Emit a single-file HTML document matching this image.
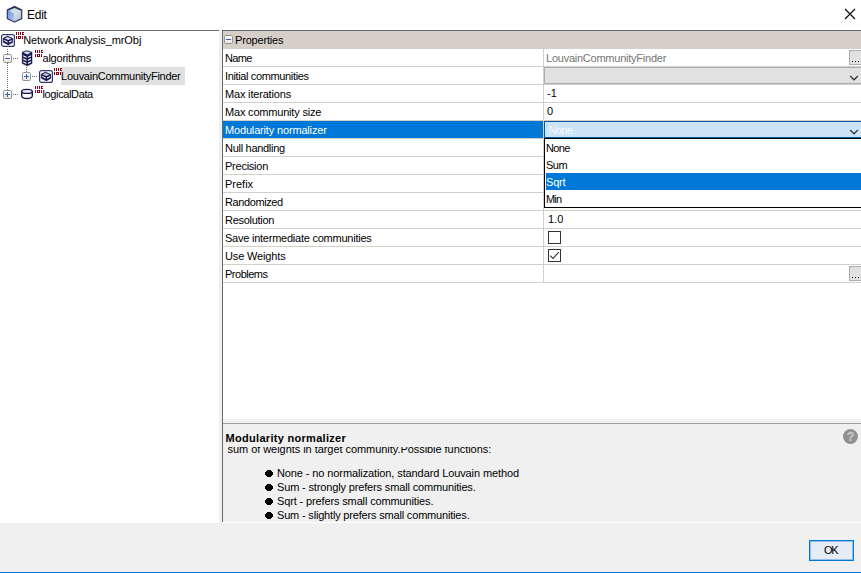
<!DOCTYPE html>
<html><head><meta charset="utf-8"><title>Edit</title>
<style>
html,body{margin:0;padding:0;}
body{width:861px;height:573px;overflow:hidden;background:#fff;position:relative;font-family:"Liberation Sans",sans-serif;font-size:11px;color:#000;}
.abs{position:absolute;}
svg{position:absolute;overflow:visible;}
#title{left:27px;top:8px;font-size:12px;line-height:15px;letter-spacing:-0.25px;}
#footer{left:0;top:523px;width:861px;height:49px;background:#f0f0f0;}
#blue{left:0;top:572px;width:861px;height:1px;background:#0078d7;}
#treetop{left:0;top:30px;width:219px;height:1px;background:#696969;}
#gap{left:219px;top:30px;width:3px;height:493px;background:#f0f0f0;}
#pleft{left:222px;top:30px;width:1px;height:492px;background:#696969;}
#ptop{left:222px;top:30px;width:639px;height:1px;background:#696969;}
#phead{left:223px;top:31px;width:638px;height:18px;background:#d4d0c8;}
#hgap{left:223px;top:419px;width:638px;height:4px;background:#f0f0f0;}
#dtop{left:223px;top:423px;width:638px;height:1px;background:#a0a0a0;}
#desc{left:223px;top:424px;width:638px;height:98px;background:#f0f0f0;overflow:hidden;}
#dbot{left:222px;top:522px;width:639px;height:1px;background:#fff;}
.row{left:223px;width:638px;height:17px;border-bottom:1px solid #d4d0c8;}
.lab{position:absolute;left:2px;top:0;line-height:18px;white-space:nowrap;}
.val{position:absolute;left:325px;top:0;line-height:17px;white-space:nowrap;}
.vdiv{left:543px;top:49px;width:1px;height:234px;background:#d4d0c8;}
.tl{position:absolute;white-space:nowrap;line-height:18px;font-size:11px;}
.dots{left:849px;width:12px;height:13px;border:1px solid #adadad;border-right:0;background:#e1e1e1;}
.dots i{position:absolute;top:10px;width:1px;height:1px;background:#000;}
.cb{left:548px;width:11px;height:11px;border:1px solid #333;background:#fff;}
#ok{left:809px;top:540px;width:43px;height:19px;border:1px solid #0078d7;box-shadow:inset 0 0 0 1px #8fc1ec;background:#e5ecf5;text-align:center;line-height:19px;font-size:11px;letter-spacing:-1.1px;text-indent:-1.5px;}
.li{position:absolute;left:1px;width:320px;height:17px;line-height:17px;white-space:nowrap;}
.li span{position:absolute;left:0px;top:1px;}
.bl{position:absolute;left:54px;white-space:nowrap;line-height:14px;}
.bu{position:absolute;left:42px;width:8px;height:7px;border-radius:4px/3.5px;background:#000;}
</style></head><body>
<!-- title bar -->
<svg style="left:0;top:0" width="30" height="30" viewBox="0 0 30 30">
 <defs>
  <linearGradient id="cl" x1="0" y1="0" x2="1" y2="1"><stop offset="0" stop-color="#6c92e2"/><stop offset="1" stop-color="#b9cbf0"/></linearGradient>
  <linearGradient id="cr" x1="0" y1="0" x2="1" y2="1"><stop offset="0" stop-color="#e6edef"/><stop offset="1" stop-color="#a9b7c9"/></linearGradient>
 </defs>
 <path d="M14.5 6.8 L21.4 10 L21.4 18.4 L14.5 21.6 L7.7 18.4 L7.7 10 Z" fill="#c9dfe0" stroke="#2a2f5e" stroke-width="1.9" stroke-linejoin="round"/>
 <path d="M7.9 10.2 L14.3 13.4 L14.3 21.4 L7.9 18.3 Z" fill="url(#cl)"/>
 <path d="M14.5 13.4 L21.2 10.2 L21.2 18.3 L14.5 21.4 Z" fill="url(#cr)"/>
</svg>
<div class="abs" id="title">Edit</div>
<svg style="left:844px;top:8px" width="12" height="12" viewBox="0 0 12 12"><path d="M1 1 L11 11 M11 1 L1 11" stroke="#000" stroke-width="1.1" fill="none"/></svg>

<!-- tree -->
<div class="abs" id="treetop"></div>
<div class="abs" style="left:61px;top:67px;width:124px;height:18px;background:#e0e0e0"></div>
<svg id="treesvg" style="left:0;top:0" width="219" height="120" viewBox="0 0 219 120">
 <defs>
  <g id="mark" fill="#8b0016" shape-rendering="crispEdges">
   <rect x="0" y="0" width="1" height="3"/><rect x="2" y="0" width="1" height="3"/><rect x="4" y="0" width="1" height="3"/>
   <rect x="6" y="0" width="1" height="3"/><rect x="7" y="0" width="1" height="1"/><rect x="7" y="2" width="1" height="1"/>
   <rect x="0" y="4" width="1" height="3"/><rect x="6" y="4" width="1" height="3"/>
   <rect x="2" y="4" width="3" height="1"/><rect x="2" y="6" width="3" height="1"/><rect x="2" y="5" width="1" height="1"/><rect x="4" y="5" width="1" height="1"/>
  </g>
  <linearGradient id="bx" x1="0" y1="0" x2="0" y2="1"><stop offset="0" stop-color="#fff"/><stop offset="1" stop-color="#e6e6e6"/></linearGradient>
  <g id="box">
   <rect x="0.5" y="0.5" width="8" height="8" rx="1.2" fill="url(#bx)" stroke="#919191"/>
   <rect x="2" y="4" width="5" height="1" fill="#3d5cae" shape-rendering="crispEdges"/>
  </g>
  <g id="plus"><use href="#box"/><rect x="4" y="2" width="1" height="5" fill="#3d5cae" shape-rendering="crispEdges"/></g>
  <g id="obj">
   <rect x="0.6" y="0.6" width="12.8" height="11.8" rx="2" fill="#fff" stroke="#34366f" stroke-width="1.2"/>
   <path d="M2.2 4.1 L6.5 2 L11.8 4.3 L11.8 8.5 L7.3 10.9 L2.2 8.3 Z" fill="#17174f" stroke="#17174f" stroke-width="0.4" stroke-linejoin="round"/>
   <path d="M3.5 4.4 L6.5 3 L10.5 4.6 L7.3 6.1 Z" fill="#d4d4e6"/>
   <path d="M3.3 5.7 L6.6 7.4 L6.6 8.7 L3.3 7 Z" fill="#f6f6fb"/>
   <path d="M8 7.4 L10.8 5.9 L10.8 7.2 L8 8.7 Z" fill="#f6f6fb"/>
  </g>
 </defs>
 <g fill="#6e6e6e" shape-rendering="crispEdges"><rect x="7" y="49" width="1" height="1"/><rect x="7" y="51" width="1" height="1"/><rect x="7" y="53" width="1" height="1"/><rect x="7" y="63" width="1" height="1"/><rect x="7" y="65" width="1" height="1"/><rect x="7" y="67" width="1" height="1"/><rect x="7" y="69" width="1" height="1"/><rect x="7" y="71" width="1" height="1"/><rect x="7" y="73" width="1" height="1"/><rect x="7" y="75" width="1" height="1"/><rect x="7" y="77" width="1" height="1"/><rect x="7" y="79" width="1" height="1"/><rect x="7" y="81" width="1" height="1"/><rect x="7" y="83" width="1" height="1"/><rect x="7" y="85" width="1" height="1"/><rect x="7" y="87" width="1" height="1"/><rect x="7" y="89" width="1" height="1"/><rect x="26" y="67" width="1" height="1"/><rect x="26" y="69" width="1" height="1"/><rect x="26" y="71" width="1" height="1"/><rect x="13" y="58" width="1" height="1"/><rect x="15" y="58" width="1" height="1"/><rect x="17" y="58" width="1" height="1"/><rect x="13" y="94" width="1" height="1"/><rect x="15" y="94" width="1" height="1"/><rect x="17" y="94" width="1" height="1"/><rect x="32" y="76" width="1" height="1"/><rect x="34" y="76" width="1" height="1"/><rect x="36" y="76" width="1" height="1"/></g>
 <use href="#obj" x="1" y="34"/>
 <use href="#mark" x="16" y="32"/>
 <use href="#box" x="3" y="54"/>
 <use href="#mark" x="35" y="50"/>
 <use href="#plus" x="22" y="72"/>
 <use href="#obj" x="39" y="70"/>
 <use href="#mark" x="54" y="68"/>
 <use href="#plus" x="3" y="90"/>
 <use href="#mark" x="35" y="86"/>
 <!-- stack icon -->
 <path d="M22.1 52.1 L26.7 50.4 L32.1 52.1 L32.1 63.6 L27.3 66.1 L22.1 63.6 Z" fill="#17174f" stroke="#17174f" stroke-width="0.3" stroke-linejoin="round"/>
 <path d="M23.2 52.6 L26.7 51.3 L31 52.6 L27.3 54.6 Z" fill="#d6d6e6"/>
 <g fill="#f4f4fa"><path d="M23.2 55.13 L26.6 56.66 L26.6 57.96 L23.2 56.43 Z"/><path d="M28.1 56.52 L31 55.22 L31 56.52 L28.1 57.82 Z"/><path d="M23.2 58.23 L26.6 59.76 L26.6 61.06 L23.2 59.53 Z"/><path d="M28.1 59.62 L31 58.32 L31 59.62 L28.1 60.92 Z"/><path d="M23.2 61.23 L26.6 62.76 L26.6 64.06 L23.2 62.53 Z"/><path d="M28.1 62.62 L31 61.32 L31 62.62 L28.1 63.92 Z"/></g>
 <!-- cylinder -->
 <g stroke="#17174f" stroke-width="1.4" fill="#fff">
  <path d="M21.7 91.4 L21.7 95.8 A5.3 2.7 0 0 0 32.3 95.8 L32.3 91.4"/>
  <ellipse cx="27" cy="91.4" rx="5.3" ry="2" fill="#e9e9f3"/>
 </g>
</svg>
<div class="tl" style="left:23.2px;top:31px;letter-spacing:-0.08px" id="t1">Network Analysis_mrObj</div>
<div class="tl" style="left:42.5px;top:49px;letter-spacing:-0.22px" id="t2">algorithms</div>
<div class="tl" style="left:61.1px;top:67px;letter-spacing:-0.27px" id="t3">LouvainCommunityFinder</div>
<div class="tl" style="left:42.5px;top:85px;letter-spacing:-0.37px" id="t4">logicalData</div>

<div class="abs" id="gap"></div>
<div class="abs" id="ptop"></div>
<div class="abs" id="pleft"></div>
<div class="abs" id="phead"><span class="lab" style="left:12px;letter-spacing:-0.180px">Properties</span></div>
<svg style="left:224px;top:35px" width="9" height="9" viewBox="0 0 9 9"><rect x="0.5" y="0.5" width="8" height="8" rx="1.2" fill="url(#bx)" stroke="#919191"/><rect x="2" y="4" width="5" height="1" fill="#3d5cae" shape-rendering="crispEdges"/></svg>

<div class="abs row" style="top:49px"><span class="lab" style="letter-spacing:-0.670px">Name</span><span class="val" style="left:323px;top:1px;color:#757575;letter-spacing:-0.24px">LouvainCommunityFinder</span></div>
<div class="abs row" style="top:67px"><span class="lab" style="letter-spacing:-0.360px">Initial communities</span></div>
<div class="abs row" style="top:85px"><span class="lab" style="letter-spacing:-0.180px">Max iterations</span><span class="val" style="left:324px">-1</span></div>
<div class="abs row" style="top:103px"><span class="lab" style="letter-spacing:-0.190px">Max community size</span><span class="val" style="left:324px;letter-spacing:-0.3px">0</span></div>
<div class="abs row" style="top:121px;background:#0078d7;color:#fff"><span class="lab" style="letter-spacing:-0.165px">Modularity normalizer</span></div>
<div class="abs row" style="top:139px"><span class="lab" style="letter-spacing:-0.290px">Null handling</span></div>
<div class="abs row" style="top:157px"><span class="lab" style="letter-spacing:-0.240px">Precision</span></div>
<div class="abs row" style="top:175px"><span class="lab" style="letter-spacing:0.000px">Prefix</span></div>
<div class="abs row" style="top:193px"><span class="lab" style="letter-spacing:-0.400px">Randomized</span></div>
<div class="abs row" style="top:211px"><span class="lab" style="letter-spacing:-0.290px">Resolution</span><span class="val">1.0</span></div>
<div class="abs row" style="top:229px"><span class="lab" style="letter-spacing:-0.236px">Save intermediate communities</span></div>
<div class="abs row" style="top:247px"><span class="lab" style="letter-spacing:-0.150px">Use Weights</span></div>
<div class="abs row" style="top:265px"><span class="lab" style="letter-spacing:-0.490px">Problems</span></div>
<div class="abs vdiv"></div>

<!-- value-side widgets -->
<div class="abs dots" style="top:50px"><i style="left:2px"></i><i style="left:5px"></i><i style="left:8px"></i></div>
<div class="abs dots" style="top:266px"><i style="left:2px"></i><i style="left:5px"></i><i style="left:8px"></i></div>
<div class="abs" style="left:544px;top:67px;width:317px;height:15px;border:1px solid #adadad;border-right:0;background:#e1e1e1"></div>
<svg style="left:849px;top:75px" width="10" height="6" viewBox="0 0 10 6"><path d="M1.1 1 L5 4.8 L8.9 1" fill="none" stroke="#383838" stroke-width="1.25"/></svg>
<div class="abs" style="left:544px;top:121px;width:317px;height:15px;border:1px solid #00579f;border-right:0;background:#cce4f7;color:#f4f9fd;line-height:15px"><span style="position:absolute;left:3.5px;top:1px;letter-spacing:-0.67px">None</span></div>
<svg style="left:849px;top:129px" width="10" height="6" viewBox="0 0 10 6"><path d="M1.1 1 L5 4.8 L8.9 1" fill="none" stroke="#383838" stroke-width="1.25"/></svg>
<div class="abs" style="left:544px;top:138px;width:317px;height:68px;border:1px solid #000;border-right:0;background:#fff">
 <div class="li" style="top:0"><span style="letter-spacing:-0.67px">None</span></div>
 <div class="li" style="top:17px"><span style="letter-spacing:-0.5px">Sum</span></div>
 <div class="li" style="top:34px;background:#0078d7;color:#fff"><span style="letter-spacing:-0.2px">Sqrt</span></div>
 <div class="li" style="top:51px"><span style="letter-spacing:-0.8px">Min</span></div>
</div>
<div class="abs cb" style="top:231px"></div>
<div class="abs cb" style="top:249px"></div>
<svg style="left:548px;top:249px" width="13" height="13" viewBox="0 0 13 13"><path d="M2.3 6.6 L5 9.4 L10.8 3.2" fill="none" stroke="#333" stroke-width="1.1"/></svg>

<div class="abs" id="hgap"></div>
<div class="abs" id="dtop"></div>
<div class="abs" id="desc">
 <div style="position:absolute;left:2.5px;top:7px;font-weight:bold;font-size:11px;line-height:14px;white-space:nowrap;letter-spacing:0.3px" id="dtitle">Modularity normalizer</div>
 <div style="position:absolute;left:0;top:23px;width:610px;height:75px;overflow:hidden">
  <div style="position:absolute;left:4.5px;top:-5px;line-height:14px;white-space:nowrap;letter-spacing:-0.05px" id="d0">sum of weights in target community.Possible functions:</div>
  <svg class="bsv" style="left:42px;top:23px" width="8" height="7" viewBox="0 0 8 7" shape-rendering="crispEdges"><rect x="2" y="0" width="4" height="7"/><rect x="1" y="1" width="6" height="5"/><rect x="0" y="2" width="8" height="3"/></svg><div class="bl" style="top:19px;letter-spacing:-0.106px" id="d1">None - no normalization, standard Louvain method</div>
  <svg class="bsv" style="left:42px;top:37px" width="8" height="7" viewBox="0 0 8 7" shape-rendering="crispEdges"><rect x="2" y="0" width="4" height="7"/><rect x="1" y="1" width="6" height="5"/><rect x="0" y="2" width="8" height="3"/></svg><div class="bl" style="top:33px;letter-spacing:-0.15px" id="d2">Sum - strongly prefers small communities.</div>
  <svg class="bsv" style="left:42px;top:51px" width="8" height="7" viewBox="0 0 8 7" shape-rendering="crispEdges"><rect x="2" y="0" width="4" height="7"/><rect x="1" y="1" width="6" height="5"/><rect x="0" y="2" width="8" height="3"/></svg><div class="bl" style="top:47px;letter-spacing:-0.134px" id="d3">Sqrt - prefers small communities.</div>
  <svg class="bsv" style="left:42px;top:65px" width="8" height="7" viewBox="0 0 8 7" shape-rendering="crispEdges"><rect x="2" y="0" width="4" height="7"/><rect x="1" y="1" width="6" height="5"/><rect x="0" y="2" width="8" height="3"/></svg><div class="bl" style="top:61px;letter-spacing:-0.18px" id="d4">Sum - slightly prefers small communities.</div>
 </div>
</div>
<svg style="left:843px;top:429px" width="16" height="16" viewBox="0 0 16 16"><circle cx="7.5" cy="7.5" r="7.5" fill="#909090"/><text x="7.6" y="11.9" text-anchor="middle" font-family="Liberation Sans, sans-serif" font-weight="bold" font-size="12.5" fill="#c6c6c6" stroke="#c6c6c6" stroke-width="0.3">?</text></svg>
<div class="abs" id="dbot"></div>
<div class="abs" id="footer"></div>
<div class="abs" id="blue"></div>
<div class="abs" id="ok">OK</div>
</body></html>
